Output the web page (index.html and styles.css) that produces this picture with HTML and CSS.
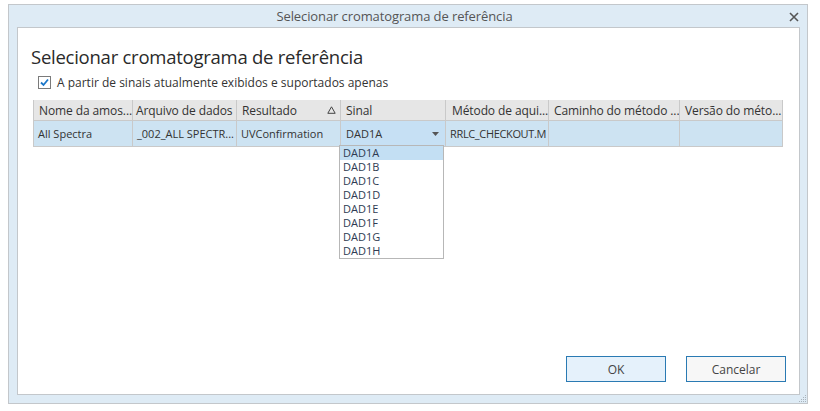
FILE: index.html
```html
<!DOCTYPE html>
<html>
<head>
<meta charset="utf-8">
<link rel="stylesheet" href="styles.css">
</head>
<body>
<div class="window">
  <div class="titlebar">
    <span class="title">Selecionar cromatograma de referência</span>
    <svg class="close" width="10" height="10" viewBox="0 0 10 10"><path d="M1 1L9 9M9 1L1 9" stroke="#555" stroke-width="1.6"/></svg>
  </div>
  <div class="panel">
    <h1 class="heading">Selecionar cromatograma de referência</h1>
    <label class="check">
      <span class="box"><svg width="11" height="11" viewBox="0 0 11 11"><path d="M2 5.5L4.5 8L9 2.5" fill="none" stroke="#1a76c9" stroke-width="1.8"/></svg></span>
      <span>A partir de sinais atualmente exibidos e suportados apenas</span>
    </label>
    <div class="grid">
      <div class="hcell c1">Nome da amos...</div>
      <div class="hcell c2">Arquivo de dados</div>
      <div class="hcell c3"><span>Resultado</span><svg class="sort" width="9" height="8" viewBox="0 0 9 8"><path d="M4.5 0.8L8.2 7.3H0.8Z" fill="none" stroke="#444" stroke-width="1"/></svg></div>
      <div class="hcell c4">Sinal</div>
      <div class="hcell c5">Método de aqui...</div>
      <div class="hcell c6">Caminho do método ...</div>
      <div class="hcell c7">Versão do méto...</div>

      <div class="cell">All Spectra</div>
      <div class="cell">_002_ALL SPECTR...</div>
      <div class="cell">UVConfirmation</div>
      <div class="cell combo"><span>DAD1A</span><svg class="arrow" width="7" height="4" viewBox="0 0 7 4"><path d="M0 0H7L3.5 4Z" fill="#555"/></svg>
        <ul class="dropdown">
          <li class="sel">DAD1A</li>
          <li>DAD1B</li>
          <li>DAD1C</li>
          <li>DAD1D</li>
          <li>DAD1E</li>
          <li>DAD1F</li>
          <li>DAD1G</li>
          <li>DAD1H</li>
        </ul>
      </div>
      <div class="cell caps">RRLC_CHECKOUT.M</div>
      <div class="cell"></div>
      <div class="cell"></div>
    </div>
    <div class="spacer"></div>
    <div class="buttons">
      <button class="btn ok">OK</button>
      <button class="btn">Cancelar</button>
    </div>
  </div>
  <svg class="grip" width="9" height="9" viewBox="0 0 9 9">
    <g fill="#a9b3bb">
      <rect x="7" y="1" width="1" height="1"/>
      <rect x="5" y="3" width="1" height="1"/><rect x="7" y="3" width="1" height="1"/>
      <rect x="3" y="5" width="1" height="1"/><rect x="5" y="5" width="1" height="1"/><rect x="7" y="5" width="1" height="1"/>
      <rect x="1" y="7" width="1" height="1"/><rect x="3" y="7" width="1" height="1"/><rect x="5" y="7" width="1" height="1"/><rect x="7" y="7" width="1" height="1"/>
    </g>
  </svg>
</div>
</body>
</html>
```
FILE: styles.css
```css
* { box-sizing: border-box; }
html, body { margin: 0; padding: 0; background: #ffffff; }
body {
  font-family: "Open Sans", "Noto Sans", "Liberation Sans", sans-serif;
  color: #333;
}
.window {
  position: relative;
  margin: 4px 0 0 8px;
  width: 800px;
  height: 400px;
  border: 1px solid #c3c7cb;
  background: #deebf5;
  padding: 0 7px 8px 8px;
  display: flex;
  flex-direction: column;
}
.titlebar {
  height: 22px;
  flex: none;
  display: flex;
  align-items: center;
  justify-content: center;
  position: relative;
  padding-right: 28px;
}
.title {
  font-size: 13px;
  color: #555;
  letter-spacing: -0.1px;
}
.close {
  position: absolute;
  right: 1px;
  top: 7px;
}
.panel {
  flex: 1;
  background: #fff;
  border: 1px solid #c3c7cb;
  display: flex;
  flex-direction: column;
  padding: 0 0 12px 13px;
}
.heading {
  margin: 16px 0 0 0;
  font-size: 18.5px;
  font-weight: 400;
  color: #2a2a2a;
  line-height: 26px;
  letter-spacing: -0.25px;
}
.check {
  display: flex;
  align-items: center;
  margin: 5px 0 0 7px;
  font-size: 12px;
  color: #333;
  gap: 6px;
  height: 14px;
}
.box {
  width: 13px;
  height: 13px;
  border: 1px solid #7a7a7a;
  display: flex;
  align-items: center;
  justify-content: center;
  background: #fff;
}
.grid {
  margin: 11px 0 0 2px;
  display: grid;
  grid-template-columns: 99px 104px 104px 105px 103px 131px 103px;
  grid-template-rows: 20px 26px;
  width: 750px;
  border-left: 1px solid #c9c9c9;
  border-bottom: 1px solid #c9c9c9;
  font-size: 11px;
}
.hcell {
  background: #e6e6e6;
  border-right: 1px solid #c9c9c9;
  padding: 0 0 0 5px;
  display: flex;
  align-items: center;
  color: #333;
  white-space: nowrap;
  overflow: hidden;
  font-size: 12px;
  letter-spacing: -0.1px;
}
.c2 { padding-left: 3px; }
.c3 { justify-content: space-between; padding-right: 4px; }
.c5 { padding-left: 6px; }
.cell {
  background: #cde3f2;
  border-right: 1px solid #c9c9c9;
  border-top: 1px solid #c9c9c9;
  padding: 0 0 0 4px;
  display: flex;
  align-items: center;
  color: #333;
  white-space: nowrap;
}
.caps { letter-spacing: -0.35px; }
.combo {
  position: relative;
  background: #c6e0f4;
  justify-content: space-between;
  padding: 0 6px 0 5px;
}
.arrow { margin-top: 1px; }
.dropdown {
  position: absolute;
  left: -2px;
  top: 24px;
  width: 105px;
  margin: 0;
  padding: 0;
  list-style: none;
  background: #fff;
  border: 1px solid #b7b7b7;
  z-index: 5;
}
.dropdown li {
  height: 14px;
  line-height: 14px;
  padding-left: 3px;
  font-size: 11px;
  color: #2f3b52;
}
.dropdown li.sel { background: #c3dff3; }
.spacer { flex: 1; }
.buttons {
  display: flex;
  justify-content: flex-end;
  gap: 20px;
  padding-right: 13px;
}
.btn {
  width: 100px;
  height: 26px;
  border: 1px solid #2a7ab3;
  background: #f7f7f7;
  font-family: inherit;
  font-size: 12px;
  color: #444;
  padding: 0;
}
.btn.ok { background: #e5f1fb; }
.grip {
  position: absolute;
  right: 0;
  bottom: 0;
}
```
